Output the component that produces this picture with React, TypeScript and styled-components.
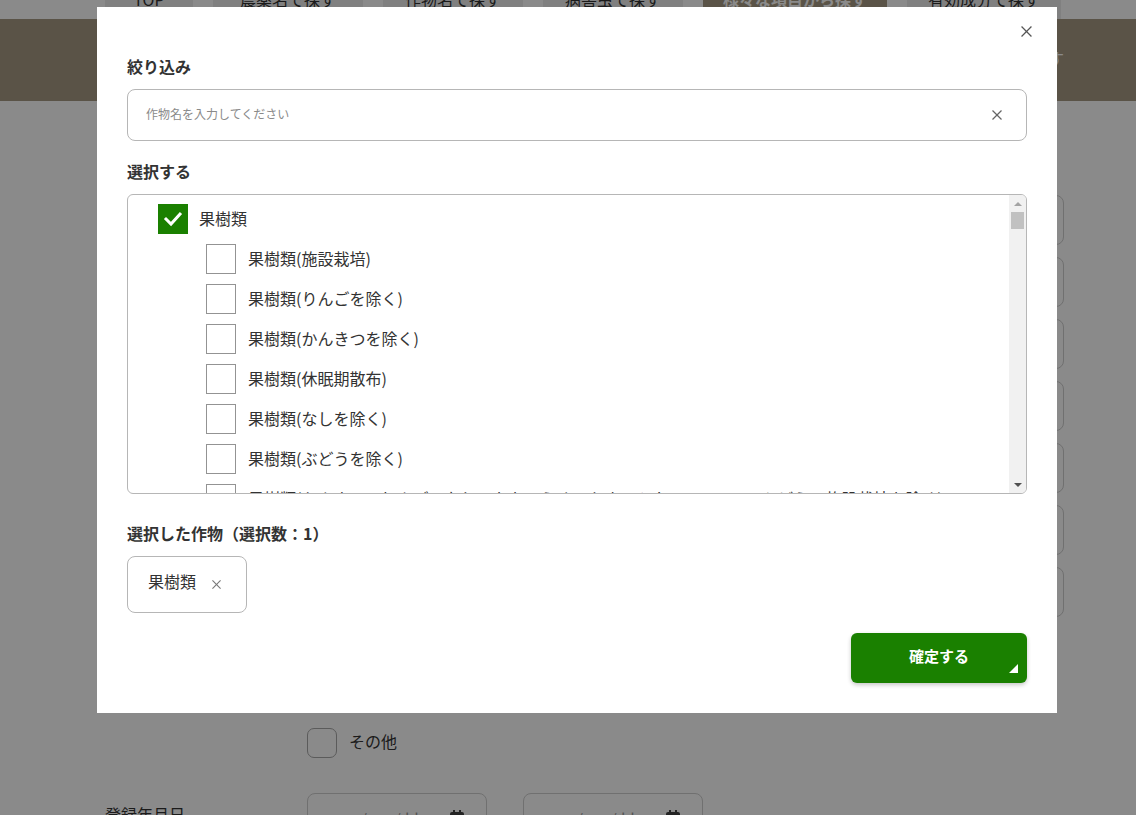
import React from "react";
import styled, { createGlobalStyle, css } from "styled-components";

const GlobalStyle = createGlobalStyle`
  html, body {
    margin: 0;
    padding: 0;
    background: #ffffff;
    overflow: hidden;
  }
  body {
    font-family: "Noto Sans CJK JP", "Noto Sans", sans-serif;
    color: #333;
  }
  * { box-sizing: border-box; }
`;

/* ---------- background page ---------- */

const Page = styled.div`
  width: 1136px;
  height: 815px;
  overflow: hidden;
`;

const TabBar = styled.nav`
  margin-top: -21px;
  height: 40px;
  display: flex;
  gap: 20px;
  padding-left: 105px;
  background: #ffffff;
`;

const Tab = styled.div<{ $w: number; $active?: boolean }>`
  width: ${(p) => p.$w}px;
  height: 40px;
  display: flex;
  align-items: center;
  justify-content: center;
  font-size: 16px;
  background: ${(p) => (p.$active ? "#a79a84" : "#ececec")};
  color: ${(p) => (p.$active ? "#ffffff" : "#333")};
  font-weight: ${(p) => (p.$active ? 700 : 400)};
`;

const Band = styled.div`
  height: 82px;
  background: #a79a84;
  display: flex;
  align-items: center;
  justify-content: flex-end;
  padding: 0 72px 4px 0;
  color: #fff;
  font-size: 16px;
`;

const Form = styled.div`
  padding: 94px 72px 0 105px;
  display: flex;
  flex-direction: column;
`;

const FormRows = styled.div`
  display: flex;
  flex-direction: column;
  gap: 12px;
`;

const FormRow = styled.div`
  display: flex;
  align-items: center;
`;

const FieldLabel = styled.div`
  width: 202px;
  font-size: 16px;
  color: #333;
`;

const FieldBox = styled.div<{ $w?: number }>`
  ${(p) => (p.$w ? css`width: ${p.$w}px;` : css`flex: 1;`)}
  height: 50px;
  border: 1px solid #cfcfcf;
  border-radius: 8px;
  background: #fff;
  display: flex;
  align-items: center;
  justify-content: space-between;
  padding: 0 22px;
  font-size: 15px;
  color: #999;
`;

const CheckGroup = styled.div`
  margin: 31px 0 0 202px;
  display: flex;
  flex-direction: column;
  gap: 50px;
`;

const BgCheckItem = styled.label`
  display: flex;
  align-items: center;
  gap: 12px;
  font-size: 16px;
  color: #333;
`;

const BgCheckText = styled.span`
  padding-bottom: 5px;
`;

const BgCheck = styled.span`
  width: 30px;
  height: 30px;
  border: 1px solid #a8a8a8;
  border-radius: 7px;
  background: #fff;
`;

const DateRow = styled.div`
  margin-top: 35px;
  display: flex;
  align-items: flex-start;
  gap: 36px;
`;

const DateLabel = styled(FieldLabel)`
  margin-right: -36px;
  padding-top: 9px;
`;

const Overlay = styled.div`
  position: fixed;
  inset: 0;
  background: rgba(0, 0, 0, 0.46);
`;

/* ---------- modal ---------- */

const Modal = styled.div`
  position: fixed;
  top: 7px;
  left: 97px;
  width: 960px;
  background: #ffffff;
  padding: 49px 30px 30px;
`;

const CloseButton = styled.button`
  position: absolute;
  top: 17px;
  right: 24px;
  width: 14px;
  height: 14px;
  padding: 0;
  border: 0;
  background: none;
  display: flex;
  align-items: center;
  justify-content: center;
  cursor: pointer;
`;

const SectionLabel = styled.div<{ $mt?: number }>`
  font-size: 16px;
  font-weight: 700;
  line-height: 20px;
  color: #333;
  margin: ${(p) => p.$mt ?? 0}px 0 13px;
`;

const SearchField = styled.div`
  height: 52px;
  border: 1px solid #b6b6b6;
  border-radius: 8px;
  display: flex;
  align-items: center;
  padding: 0 24px 0 18px;
`;

const SearchInput = styled.input`
  flex: 1;
  border: 0;
  outline: none;
  font-family: inherit;
  font-size: 12px;
  color: #333;
  background: transparent;
  padding: 0 0 4px;
  &::placeholder {
    color: #8a8a8a;
  }
`;

const ListBox = styled.div`
  height: 300px;
  border: 1px solid #b6b6b6;
  border-radius: 6px;
  display: flex;
  overflow: hidden;
`;

const ListBody = styled.div`
  flex: 1;
  overflow: hidden;
  padding: 4px 0 0 30px;
`;

const Row = styled.div<{ $indent?: boolean }>`
  height: 40px;
  display: flex;
  align-items: center;
  padding-left: ${(p) => (p.$indent ? 48 : 0)}px;
`;

const Check = styled.span<{ $checked?: boolean }>`
  flex: none;
  width: 30px;
  height: 30px;
  border: 1px solid ${(p) => (p.$checked ? "#1a8000" : "#939393")};
  background: ${(p) => (p.$checked ? "#1a8000" : "#fff")};
  display: flex;
  align-items: center;
  justify-content: center;
`;

const RowLabel = styled.span<{ $indent?: boolean }>`
  margin-left: ${(p) => (p.$indent ? 12 : 11)}px;
  padding-bottom: 2px;
  font-size: 16px;
  color: #333;
  white-space: nowrap;
`;

const ScrollBar = styled.div`
  width: 17px;
  flex: none;
  background: #f1f1f1;
  display: flex;
  flex-direction: column;
  align-items: center;
`;

const ScrollArrow = styled.div<{ $down?: boolean }>`
  height: 17px;
  width: 17px;
  display: flex;
  align-items: center;
  justify-content: center;
  margin-top: ${(p) => (p.$down ? "auto" : "0")};
  &::before {
    content: "";
    width: 0;
    height: 0;
    border-left: 4px solid transparent;
    border-right: 4px solid transparent;
    ${(p) =>
      p.$down
        ? css`border-top: 4px solid #505050;`
        : css`border-bottom: 4px solid #a3a3a3;`}
  }
`;

const ScrollThumb = styled.div`
  width: 13px;
  height: 17px;
  background: #c1c1c1;
`;

const ChipRow = styled.div`
  display: flex;
  gap: 10px;
`;

const Chip = styled.div`
  height: 57px;
  border: 1px solid #b6b6b6;
  border-radius: 8px;
  display: inline-flex;
  align-items: center;
  padding: 0 25px 0 20px;
  gap: 16px;
  font-size: 16px;
  color: #333;
`;

const ChipText = styled.span`
  padding-bottom: 7px;
`;

const Footer = styled.div`
  margin-top: 20px;
  display: flex;
  justify-content: flex-end;
`;

const ConfirmButton = styled.button`
  position: relative;
  width: 176px;
  height: 50px;
  border: 0;
  border-radius: 6px;
  background: #1a8000;
  color: #fff;
  font-family: inherit;
  font-size: 15px;
  font-weight: 700;
  padding: 0 0 6px;
  box-shadow: 0 2px 4px rgba(0, 0, 0, 0.22);
  cursor: pointer;
  &::after {
    content: "";
    position: absolute;
    right: 9px;
    bottom: 10px;
    width: 0;
    height: 0;
    border-left: 9px solid transparent;
    border-bottom: 9px solid #fff;
  }
`;

const Cross = ({ size, color, w = 1.2 }: { size: number; color: string; w?: number }) => (
  <svg width={size} height={size} viewBox="0 0 10 10">
    <line x1="0.5" y1="0.5" x2="9.5" y2="9.5" stroke={color} strokeWidth={w} />
    <line x1="9.5" y1="0.5" x2="0.5" y2="9.5" stroke={color} strokeWidth={w} />
  </svg>
);

const CheckMark = () => (
  <svg width="20" height="16" viewBox="0 0 20 16">
    <polyline
      points="3,8 8,13 17,3"
      fill="none"
      stroke="#fff"
      strokeWidth="3"
      strokeLinecap="square"
    />
  </svg>
);

const CalendarIcon = () => (
  <svg width="14" height="16" viewBox="0 0 14 16">
    <rect x="3" y="0" width="2" height="4" fill="#444" />
    <rect x="9" y="0" width="2" height="4" fill="#444" />
    <rect x="0" y="2" width="14" height="14" rx="2" fill="#444" />
    <rect x="1.5" y="6" width="11" height="8.5" fill="#fff" />
  </svg>
);

const tabs = [
  { label: "TOP", w: 88 },
  { label: "農薬名で探す", w: 150 },
  { label: "作物名で探す", w: 140 },
  { label: "病害虫で探す", w: 140 },
  { label: "様々な項目から探す", w: 184, active: true },
  { label: "有効成分で探す", w: 154 },
];

const formLabels = ["農薬名", "作物名", "病害虫名", "有効成分", "用途", "剤型", "使用方法"];

const items = [
  "果樹類(施設栽培)",
  "果樹類(りんごを除く)",
  "果樹類(かんきつを除く)",
  "果樹類(休眠期散布)",
  "果樹類(なしを除く)",
  "果樹類(ぶどうを除く)",
  "果樹類(かんきつ、りんご、なし、もも、うめ、かき、キウイフルーツ、ぶどう、施設栽培を除く)",
];

export default function App() {
  return (
    <>
      <GlobalStyle />
      <Page>
        <TabBar>
          {tabs.map((t) => (
            <Tab key={t.label} $w={t.w} $active={t.active}>
              {t.label}
            </Tab>
          ))}
        </TabBar>
        <Band>条件を指定して探す</Band>
        <Form>
          <FormRows>
            {formLabels.map((l) => (
              <FormRow key={l}>
                <FieldLabel>{l}</FieldLabel>
                <FieldBox />
              </FormRow>
            ))}
          </FormRows>
          <CheckGroup>
            <BgCheckItem>
              <BgCheck />
              <BgCheckText>野菜類</BgCheckText>
            </BgCheckItem>
            <BgCheckItem>
              <BgCheck />
              <BgCheckText>その他</BgCheckText>
            </BgCheckItem>
          </CheckGroup>
          <DateRow>
            <DateLabel>登録年月日</DateLabel>
            <FieldBox $w={180}>
              yyyy/mm/dd
              <CalendarIcon />
            </FieldBox>
            <FieldBox $w={180}>
              yyyy/mm/dd
              <CalendarIcon />
            </FieldBox>
          </DateRow>
        </Form>
      </Page>
      <Overlay />
      <Modal role="dialog">
        <CloseButton aria-label="閉じる">
          <Cross size={11} color="#555" w={1.1} />
        </CloseButton>
        <SectionLabel>絞り込み</SectionLabel>
        <SearchField>
          <SearchInput placeholder="作物名を入力してください" />
          <Cross size={10} color="#666" w={1.3} />
        </SearchField>
        <SectionLabel $mt={20}>選択する</SectionLabel>
        <ListBox>
          <ListBody>
            <Row>
              <Check $checked>
                <CheckMark />
              </Check>
              <RowLabel>果樹類</RowLabel>
            </Row>
            {items.map((it) => (
              <Row key={it} $indent>
                <Check />
                <RowLabel $indent>{it}</RowLabel>
              </Row>
            ))}
          </ListBody>
          <ScrollBar>
            <ScrollArrow />
            <ScrollThumb />
            <ScrollArrow $down />
          </ScrollBar>
        </ListBox>
        <SectionLabel $mt={29}>選択した作物（選択数：1）</SectionLabel>
        <ChipRow>
          <Chip>
            <ChipText>果樹類</ChipText>
            <Cross size={9} color="#777" w={1.2} />
          </Chip>
        </ChipRow>
        <Footer>
          <ConfirmButton>確定する</ConfirmButton>
        </Footer>
      </Modal>
    </>
  );
}
